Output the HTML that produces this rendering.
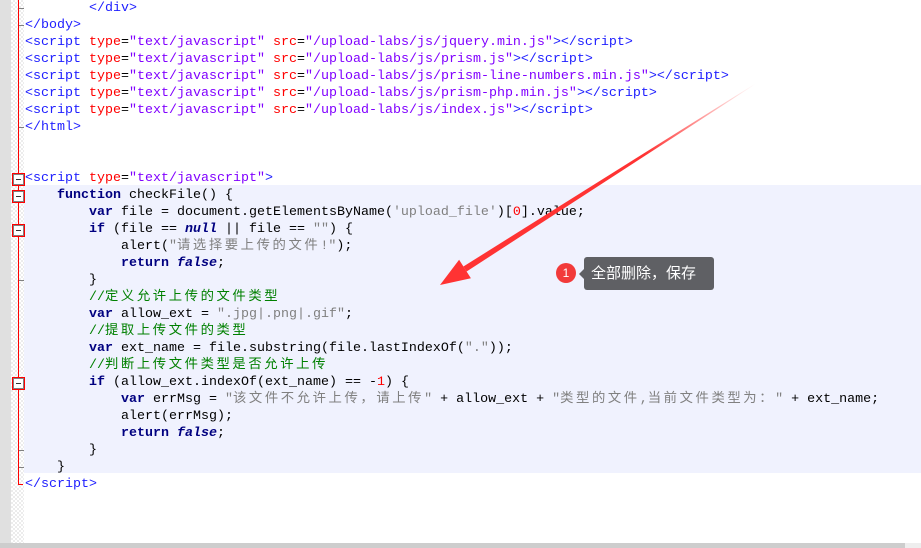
<!DOCTYPE html>
<html><head><meta charset="utf-8"><style>
body{margin:0;width:921px;height:548px;overflow:hidden;background:#fff;position:relative;font-family:"Liberation Mono","Noto Sans CJK SC",monospace;}
.gut{position:absolute;left:0;top:0;width:11px;height:543px;background:#e0e0e0}
.dot{position:absolute;left:11px;top:0;width:13px;height:543px;background-image:repeating-conic-gradient(#ececec 0 25%,#fff 0 50%);background-size:4px 4px}
.hl{position:absolute;left:24px;top:185px;width:897px;height:288px;background:#f0f2fe}
.red{position:absolute;left:18px;top:0;width:1px;height:484px;background:#f00}
.tick{position:absolute;left:19px;width:5px;height:1px;background:#808080}
.fb{position:absolute;left:13px;width:9px;height:9px;border:1px solid #808080;background:#fff;outline:1px solid #f00}
.fb:after{content:"";position:absolute;left:2px;top:4px;width:5px;height:1px;background:#333}
.code{position:absolute;left:25px;top:0px;font-size:13.33px;line-height:17px;white-space:pre;color:#000}
.t{color:#2020ff}.a{color:#f00}.v{color:#8000ff}.k{color:#000080;font-weight:bold}.i{font-style:italic}.s{color:#808080}.c{color:#008000}.n{color:#f00}
.z{letter-spacing:2.6px}
.scroll{position:absolute;left:0;top:543px;width:905px;height:5px;background:#cdcdcd}
.scroll2{position:absolute;left:905px;top:543px;width:16px;height:5px;background:#eee}
.tip{position:absolute;left:584px;top:257px;width:130px;height:33px;background:#5f6064;border-radius:3px;color:#fff;font:15px "Liberation Sans","Noto Sans CJK SC",sans-serif;line-height:33px;text-indent:7px}
.tip:before{content:"";position:absolute;left:-5px;top:12px;border:5px solid transparent;border-left:0;border-right-color:#5f6064}
.badge{position:absolute;left:556px;top:263px;width:20px;height:20px;border-radius:50%;background:#f23a3a;color:#fff;font:12px "Liberation Sans",sans-serif;text-align:center;line-height:20px}
</style></head><body>
<div class="gut"></div><div class="dot"></div><div class="hl"></div>
<div class="red"></div>
<div class="tick" style="top:8px"></div><div class="tick" style="top:25px"></div><div class="tick" style="top:127px"></div>
<div class="tick" style="top:280px"></div><div class="tick" style="top:450px"></div><div class="tick" style="top:467px"></div>
<div class="tick" style="top:484px;background:#f00;left:18px"></div>
<div class="fb" style="top:174px"></div><div class="fb" style="top:191px"></div><div class="fb" style="top:225px"></div><div class="fb" style="top:378px"></div>
<div class="code">        <span class="t">&lt;/div&gt;</span>
<span class="t">&lt;/body&gt;</span>
<span class="t">&lt;script</span> <span class="a">type</span>=<span class="v">"text/javascript"</span> <span class="a">src</span>=<span class="v">"/upload-labs/js/jquery.min.js"</span><span class="t">&gt;&lt;/script&gt;</span>
<span class="t">&lt;script</span> <span class="a">type</span>=<span class="v">"text/javascript"</span> <span class="a">src</span>=<span class="v">"/upload-labs/js/prism.js"</span><span class="t">&gt;&lt;/script&gt;</span>
<span class="t">&lt;script</span> <span class="a">type</span>=<span class="v">"text/javascript"</span> <span class="a">src</span>=<span class="v">"/upload-labs/js/prism-line-numbers.min.js"</span><span class="t">&gt;&lt;/script&gt;</span>
<span class="t">&lt;script</span> <span class="a">type</span>=<span class="v">"text/javascript"</span> <span class="a">src</span>=<span class="v">"/upload-labs/js/prism-php.min.js"</span><span class="t">&gt;&lt;/script&gt;</span>
<span class="t">&lt;script</span> <span class="a">type</span>=<span class="v">"text/javascript"</span> <span class="a">src</span>=<span class="v">"/upload-labs/js/index.js"</span><span class="t">&gt;&lt;/script&gt;</span>
<span class="t">&lt;/html&gt;</span>


<span class="t">&lt;script</span> <span class="a">type</span>=<span class="v">"text/javascript"</span><span class="t">&gt;</span>
    <span class="k">function</span> checkFile() {
        <span class="k">var</span> file = document.getElementsByName(<span class="s">'upload_file'</span>)[<span class="n">0</span>].value;
        <span class="k">if</span> (file == <span class="k i">null</span> || file == <span class="s">""</span>) {
            alert(<span class="s">"<span class="z">请选择要上传的文件</span>!"</span>);
            <span class="k">return</span> <span class="k i">false</span>;
        }
        <span class="c">//<span class="z">定义允许上传的文件类型</span></span>
        <span class="k">var</span> allow_ext = <span class="s">".jpg|.png|.gif"</span>;
        <span class="c">//<span class="z">提取上传文件的类型</span></span>
        <span class="k">var</span> ext_name = file.substring(file.lastIndexOf(<span class="s">"."</span>));
        <span class="c">//<span class="z">判断上传文件类型是否允许上传</span></span>
        <span class="k">if</span> (allow_ext.indexOf(ext_name) == -<span class="n">1</span>) {
            <span class="k">var</span> errMsg = <span class="s">"<span class="z">该文件不允许上传，请上传</span>"</span> + allow_ext + <span class="s">"<span class="z">类型的文件</span>,<span class="z">当前文件类型为：</span>"</span> + ext_name;
            alert(errMsg);
            <span class="k">return</span> <span class="k i">false</span>;
        }
    }
<span class="t">&lt;/script&gt;</span></div>
<svg style="position:absolute;left:0;top:0" width="921" height="548">
<defs><linearGradient id="g" x1="755" y1="84" x2="440" y2="285" gradientUnits="userSpaceOnUse"><stop offset="0" stop-color="#f33" stop-opacity="0"/><stop offset="0.35" stop-color="#f33"/><stop offset="1" stop-color="#f33"/></linearGradient></defs>
<polygon points="755,83.7 755.3,84.3 466.6,271.5 463.4,266.5" fill="url(#g)"/>
<polygon points="440,285 459.1,259.7 470.9,278.3" fill="#f33"/>
</svg>
<div class="badge">1</div>
<div class="tip">全部删除，保存</div>
<div class="scroll"></div><div class="scroll2"></div>
</body></html>
